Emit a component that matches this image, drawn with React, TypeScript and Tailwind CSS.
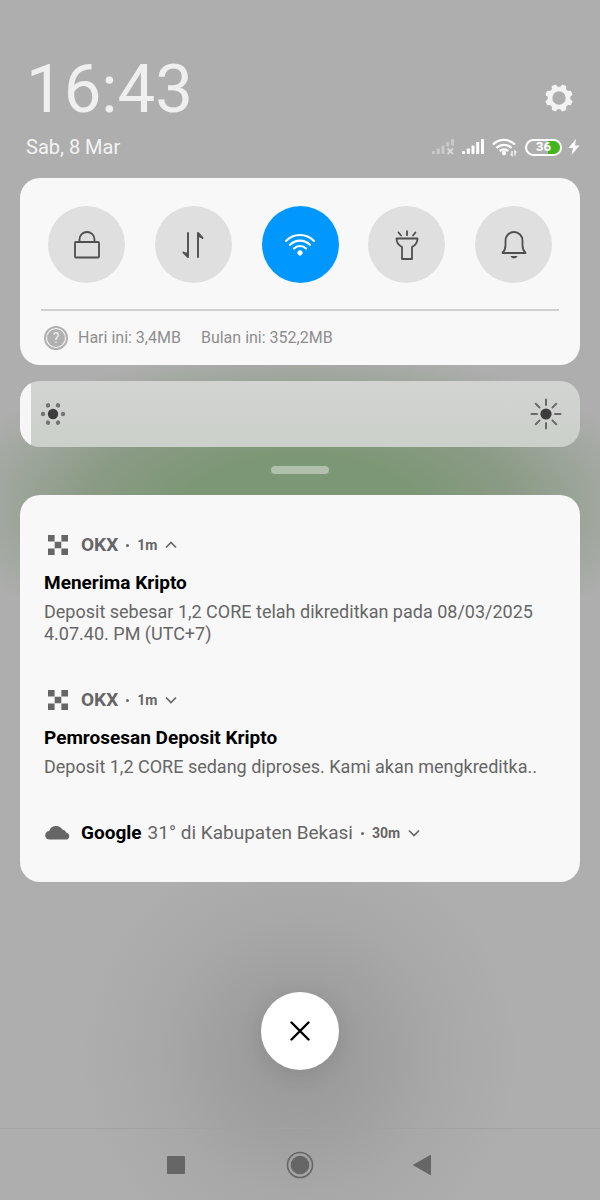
import { useState } from "react";
import type { ReactNode } from "react";

const LockIcon = () => (
  <svg width="26" height="28" viewBox="0 0 26 28" fill="none" stroke="#4f4f4f" strokeWidth="1.8">
    <rect x="1" y="11" width="24" height="15.5" rx="1" />
    <path d="M5.500 11V8.500a7.500 7.500 0 0 1 15 0V11" />
  </svg>
);

const DataIcon = () => (
  <svg width="22" height="28" viewBox="0 0 22 28" fill="none" stroke="#4f4f4f" strokeWidth="1.9" strokeLinecap="round" strokeLinejoin="round">
    <path d="M6 2v24L1.500 21.500" />
    <path d="M16 26V2l4.500 5" />
    <path d="M6 26l-3.500-5 3.500 1zM16 2l3.500 5-3.500-1z" fill="#4f4f4f" stroke="none" />
  </svg>
);

const WifiIcon = () => (
  <svg width="32" height="26" viewBox="0 0 32 26" fill="none" stroke="#fff" strokeWidth="2.1" strokeLinecap="round">
    <path d="M2 9a19.500 19.500 0 0 1 28 0" />
    <path d="M6 12.800a14 14 0 0 1 20 0" />
    <path d="M10 16.500a8.500 8.500 0 0 1 12 0" />
    <path d="M16 24l-2.600-2.200a2.700 2.700 0 1 1 5.200 0z" fill="#fff" stroke="none" />
  </svg>
);

const TorchIcon = () => (
  <svg width="24" height="30" viewBox="0 0 24 30" fill="none" stroke="#4f4f4f" strokeWidth="1.8" strokeLinecap="round" strokeLinejoin="round">
    <path d="M12 1.200v4M3.500 2.500l2.500 3M20.500 2.500l-2.500 3" />
    <path d="M1.500 8.500h21c0 4-1.500 6.500-5.500 8.500v12H7V17c-4-2-5.500-4.500-5.500-8.500z" />
  </svg>
);

const BellIcon = () => (
  <svg width="26" height="30" viewBox="0 0 26 30" fill="none" stroke="#4f4f4f" strokeWidth="1.8" strokeLinejoin="round">
    <path d="M1.500 23c2.500-2.500 3-5 3-8v-4.500a8.500 8.500 0 0 1 17 0V15c0 3 .500 5.500 3 8z" />
    <path d="M9.500 26h7c-.500 1.500-1.800 2.300-3.500 2.300S10 27.500 9.500 26z" fill="#4f4f4f" stroke="none" />
  </svg>
);

const GearIcon = () => (
  <svg width="30" height="30" viewBox="-15 -15 30 30" fill="#f3f3f3">
    <circle r="9" fill="none" stroke="#f3f3f3" strokeWidth="4.6" />
    {[0, 1, 2, 3, 4, 5, 6, 7].map((i) => (
      <path key={i} d="M-3.400-10l1-3.200q.300-.600 1-.600h2.800q.700 0 1 .600l1 3.200z" transform={`rotate(${22.5 + i * 45})`} />
    ))}
  </svg>
);

const SignalIcon = ({ noService = false }: { noService?: boolean }) => (
  <svg width="24" height="18" viewBox="0 0 24 18" fill="#fff" fillOpacity={noService ? 0.35 : 1}>
    <rect x="1" y="13" width="3" height="3" rx=".8" />
    <rect x="5.8" y="10.5" width="3" height="5.5" rx=".8" />
    <rect x="10.5" y="7.5" width="3" height="8.5" rx=".8" />
    <rect x="15.2" y="4" width="3" height={noService ? 4.5 : 12} rx=".8" />
    <rect x="20" y="1" width="3" height={noService ? 6.5 : 15} rx=".8" />
    {noService && (
      <path d="M16.500 10.500l5.500 5.500M22 10.500l-5.500 5.500" stroke="#fff" strokeOpacity=".5" strokeWidth="2" />
    )}
  </svg>
);

const StatusWifi = () => (
  <svg width="28" height="20" viewBox="-1 0 28 20" fill="none" stroke="#fff" strokeWidth="2.4">
    <path d="M1 7.500a15.500 15.500 0 0 1 22 0" />
    <path d="M4.500 11a10.500 10.500 0 0 1 15 0" />
    <path d="M7.700 14.200a6 6 0 0 1 8.600 0" />
    <circle cx="12" cy="16" r="2.2" fill="#fff" stroke="none" />
    <path d="M20 14v4.500l-1.300-1.300M23 18.500V14l1.300 1.300" strokeWidth="1.2" />
  </svg>
);

const OkxIcon = () => (
  <svg width="20" height="20" viewBox="0 0 20 20" fill="#666">
    <path d="M0 0h6.600v6.600H0zM13.400 0H20v6.600h-6.600zM6.700 6.700h6.600v6.600H6.700zM0 13.400h6.600V20H0zM13.400 13.400H20V20h-6.600z" />
  </svg>
);

const CloudIcon = () => (
  <svg width="28" height="16" viewBox="0 0 28 16" fill="#666">
    <path d="M5.500 14.500a4.200 4.200 0 0 1-.300-8.400A7.200 7.200 0 0 1 18.400 4.600a5.200 5.200 0 0 1 4 3.200 3.500 3.500 0 0 1 .800 6.700z" />
  </svg>
);

const Chevron = ({ up = false }: { up?: boolean }) => (
  <svg width="12" height="8" viewBox="0 0 12 8" fill="none" stroke="#666" strokeWidth="1.7">
    <path d={up ? "M1 6.500l5-5 5 5" : "M1 1.500l5 5 5-5"} />
  </svg>
);

const DimIcon = () => (
  <svg width="26" height="26" viewBox="-13 -13 26 26">
    <circle r="5.2" fill="#3d3d3d" />
    {[0, 60, 120, 180, 240, 300].map((a) => (
      <circle key={a} cx="10" r="2.2" fill="#737573" transform={`rotate(${a})`} />
    ))}
  </svg>
);

const BrightIcon = () => (
  <svg width="32" height="32" viewBox="-16 -16 32 32">
    <circle r="5.6" fill="#3d3d3d" />
    {[0, 45, 90, 135, 180, 225, 270, 315].map((a) => (
      <path key={a} d="M9 0h5.500" stroke="#686a68" strokeWidth="2" strokeLinecap="round" transform={`rotate(${a})`} />
    ))}
  </svg>
);

const toggles = [
  { label: "Kunci layar", icon: <LockIcon /> },
  { label: "Data seluler", icon: <DataIcon /> },
  { label: "Wi-Fi", icon: <WifiIcon />, active: true },
  { label: "Senter", icon: <TorchIcon /> },
  { label: "Dering", icon: <BellIcon /> },
];

function Brightness() {
  const [level, setLevel] = useState(2);
  return (
    <div className="relative mt-4 overflow-hidden rounded-[20px] bg-linear-to-b from-[#d3d4d2] to-[#cbd0ca]">
      <input
        type="range"
        aria-label="Kecerahan"
        min={0}
        max={100}
        value={level}
        onChange={(e) => setLevel(Number(e.target.value))}
        className="block h-[66px] w-full appearance-none bg-linear-to-r from-[#f6f6f6] to-[#f6f6f6] bg-no-repeat [&::-webkit-slider-thumb]:appearance-none"
        style={{ backgroundSize: `${level}% 100%` }}
      />
      <div className="pointer-events-none absolute inset-0 flex items-center justify-between pr-[18px] pl-5">
        <DimIcon />
        <BrightIcon />
      </div>
    </div>
  );
}

function Age({ children, up }: { children: ReactNode; up?: boolean }) {
  return (
    <>
      <span className="mx-2 size-[3px] rounded-full bg-[#666]" />
      <span className="text-[14px] font-bold">{children}</span>
      <button aria-label={up ? "Ciutkan" : "Luaskan"} className="ml-2">
        <Chevron up={up} />
      </button>
    </>
  );
}

function OkxNotification({ title, text, up }: { title: string; text: string; up?: boolean }) {
  return (
    <article>
      <header className="flex h-6 items-center">
        <span className="ml-1 w-[33px]">
          <OkxIcon />
        </span>
        <span className="font-bold">OKX</span>
        <Age up={up}>1m</Age>
      </header>
      <h2 className="mt-[14px] leading-6 font-bold text-black">{title}</h2>
      <p className="mt-[6px] text-[18px] leading-[22px]">{text}</p>
    </article>
  );
}

export default function App() {
  return (
    <div className="flex min-h-screen flex-col bg-[#aeaeae] bg-[radial-gradient(ellipse_60%_13%_at_50%_42%,#7c9775_0%,#7c9775_30%,#8b9b86_60%,#a2a8a0_85%,transparent_100%),radial-gradient(circle_at_50%_88%,#989898_0px,#a0a0a0_80px,#a8a8a8_140px,transparent_220px)] font-[Roboto,sans-serif] text-[19px] text-[#666]">
      <header className="px-[26px] pt-[55px]">
        <div className="flex items-end justify-between">
          <time className="text-[67px] leading-[68px] text-[#efefef]">16:43</time>
          <button aria-label="Setelan" className="mb-[10px]">
            <GearIcon />
          </button>
        </div>
        <div className="-mr-[6px] mt-3 flex h-6 items-center justify-between">
          <span className="text-[20px] text-[#f3f3f3]">Sab, 8 Mar</span>
          <div className="flex items-center gap-[6px]">
            <SignalIcon noService />
            <SignalIcon />
            <StatusWifi />
            <span className="relative flex h-[17px] w-[37px] items-center justify-center rounded-full border-2 border-white">
              <span className="absolute inset-y-0 right-0 w-3 rounded-r-full bg-[#43b51f]" />
              <span className="relative text-[13px] leading-3 font-bold text-white">36</span>
            </span>
            <svg width="12" height="16" viewBox="0 0 12 16" fill="#fff">
              <path d="M8 0L.500 9H5L3.500 16 11.500 6.500H7z" />
            </svg>
          </div>
        </div>
      </header>

      <main className="mt-[19px] px-5">
        <section className="rounded-[20px] bg-[#f8f8f8]">
          <div className="flex justify-between px-7 pt-7">
            {toggles.map((t) => (
              <button
                key={t.label}
                aria-label={t.label}
                aria-pressed={!!t.active}
                className={`flex size-[77px] items-center justify-center rounded-full ${t.active ? "bg-[#0098ff]" : "bg-[#dfdfdf]"}`}
              >
                {t.icon}
              </button>
            ))}
          </div>
          <div className="mx-[21px] mt-[26px] flex h-14 items-center border-t-2 border-[#d0d0d0] pl-[3px] text-[16px] text-[#8e8e8e]">
            <span className="mr-[10px] flex size-6 items-center justify-center rounded-full border-2 border-[#b0b0b0] p-[1px]">
              <span className="flex size-full items-center justify-center rounded-full bg-[#b0b0b0] text-[14px] leading-none text-[#eee]">?</span>
            </span>
            <span>Hari ini: 3,4MB</span>
            <span className="ml-5">Bulan ini: 352,2MB</span>
          </div>
        </section>

        <Brightness />

        <div className="mx-auto mt-[19px] h-2 w-[58px] rounded-full bg-[#b0c0ab]" />

        <section className="mt-[21px] flex flex-col gap-[43px] rounded-[20px] bg-[#f8f8f8] px-6 pt-[38px] pb-[37px]">
          <OkxNotification
            up
            title="Menerima Kripto"
            text="Deposit sebesar 1,2 CORE telah dikreditkan pada 08/03/2025 4.07.40. PM (UTC+7)"
          />
          <OkxNotification
            title="Pemrosesan Deposit Kripto"
            text="Deposit 1,2 CORE sedang diproses. Kami akan mengkreditka.."
          />
          <article className="flex h-6 items-center">
            <span className="w-[37px]">
              <CloudIcon />
            </span>
            <span className="font-bold text-black">Google</span>
            <span className="ml-[6px]">31° di Kabupaten Bekasi</span>
            <Age>30m</Age>
          </article>
        </section>
      </main>

      <div className="mt-auto flex justify-center pt-[100px] pb-[58px]">
        <button
          aria-label="Hapus semua"
          className="flex size-[78px] items-center justify-center rounded-full bg-white shadow-[0_4px_24px_rgba(0,0,0,0.1)]"
        >
          <svg width="20" height="20" viewBox="0 0 20 20" stroke="#000" strokeWidth="2.4" strokeLinecap="round">
            <path d="M1.500 1.500l17 17M18.500 1.500l-17 17" />
          </svg>
        </button>
      </div>

      <nav className="flex h-[72px] items-center justify-center gap-24 border-t border-[#a2a2a2]">
        <button aria-label="Terbaru">
          <svg width="28" height="28" viewBox="0 0 28 28" fill="#666">
            <rect x="5" y="5" width="18" height="18" rx="1" />
          </svg>
        </button>
        <button aria-label="Beranda">
          <svg width="28" height="28" viewBox="0 0 28 28" fill="#666">
            <circle cx="14" cy="14" r="9.3" />
            <circle cx="14" cy="14" r="12.5" fill="none" stroke="#666" strokeWidth="1.6" />
          </svg>
        </button>
        <button aria-label="Kembali">
          <svg width="28" height="28" viewBox="0 0 28 28" fill="#666">
            <path d="M3.500 13.400L20.200 4q.800-.300.800.500v19q0 .800-.800.500L3.500 14.600q-.800-.600 0-1.200z" />
          </svg>
        </button>
      </nav>
    </div>
  );
}
